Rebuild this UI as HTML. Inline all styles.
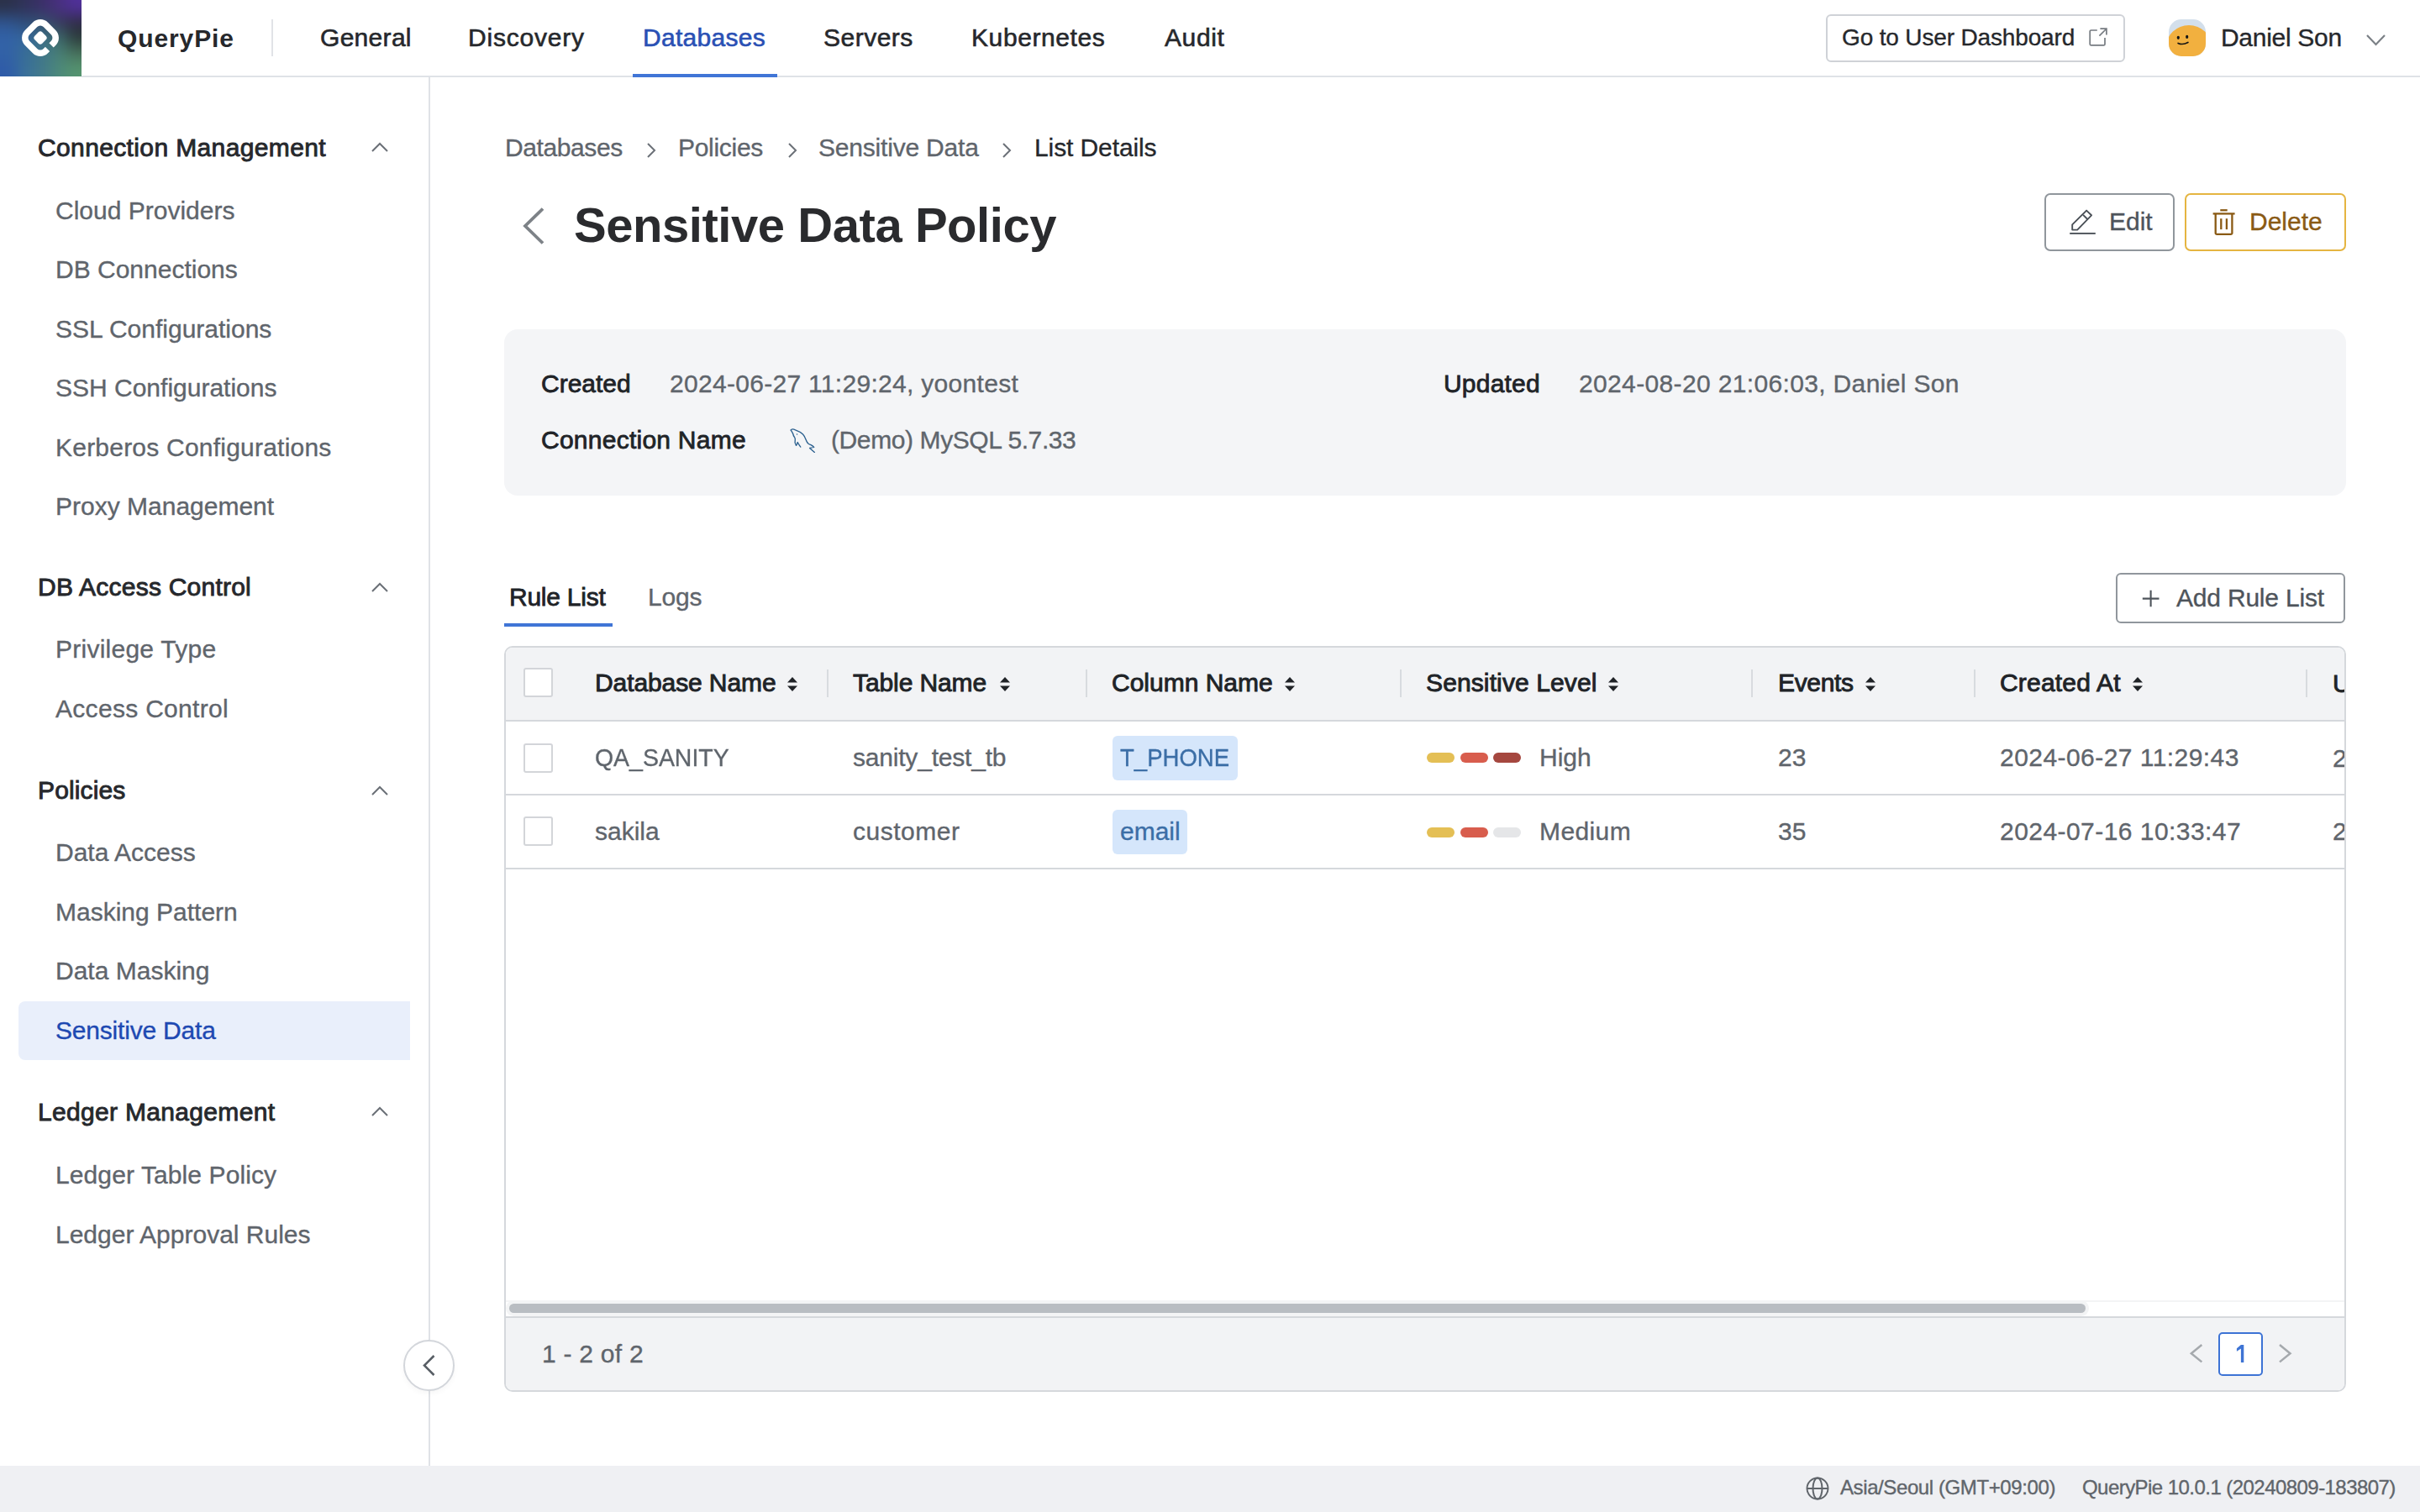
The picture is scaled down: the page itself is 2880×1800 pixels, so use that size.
<!DOCTYPE html>
<html><head><meta charset="utf-8">
<style>
*{box-sizing:border-box;margin:0;padding:0}
html,body{width:2880px;height:1800px;overflow:hidden;background:#fff;font-family:"Liberation Sans",sans-serif;color:#2a2c30}
.a{position:absolute}
.t{position:absolute;white-space:nowrap;line-height:1}
.f30{font-size:30px}
.b{font-weight:bold}
.g{color:#5f656c}
.dk{color:#26282c}
.sb{position:absolute;left:66px;font-size:30px;line-height:30px;color:#5f656c;white-space:nowrap}
.sh{position:absolute;left:45px;font-size:30px;line-height:30px;color:#26282c;white-space:nowrap;-webkit-text-stroke:0.9px #26282c}
.t,.sb,.td{-webkit-text-stroke:0.35px currentColor}
.b{-webkit-text-stroke:0}
.chev{position:absolute;left:442px;width:20px;height:12px}
.sep{position:absolute;top:797px;width:2px;height:33px;background:#d8dbdf}
.th{position:absolute;top:798px;font-size:30px;line-height:30px;color:#202327;white-space:nowrap;-webkit-text-stroke:0.9px #202327}
.td{position:absolute;font-size:30px;line-height:30px;color:#5f656c;white-space:nowrap}
.cb{position:absolute;left:623px;width:35px;height:35px;border:2px solid #d3d5d9;border-radius:3px;background:#fff}
.sort{position:absolute;top:805px;width:14px;height:19px}
.bar{position:absolute;width:33px;height:12px;border-radius:6px}
.sm{-webkit-text-stroke:0.8px #202327}
.navi{-webkit-text-stroke:0.6px currentColor}
</style></head>
<body>
<!-- HEADER -->
<div class="a" style="left:0;top:0;width:97px;height:91px;overflow:hidden;background:#3a6a8a"><div style="position:absolute;left:-30px;top:-30px;width:157px;height:151px;display:grid;grid-template-columns:50px 20px 20px 20px 47px;grid-template-rows:48px 18px 18px 18px 49px;filter:blur(9px)"><div style="background:#2b3149"></div><div style="background:#30325a"></div><div style="background:#3b2f68"></div><div style="background:#48307f"></div><div style="background:#50309a"></div><div style="background:#2f5590"></div><div style="background:#2f4d7a"></div><div style="background:#33536f"></div><div style="background:#383a5e"></div><div style="background:#2f2c45"></div><div style="background:#3262a8"></div><div style="background:#35679e"></div><div style="background:#3e7088"></div><div style="background:#3d6a6c"></div><div style="background:#2b3b3a"></div><div style="background:#3262a6"></div><div style="background:#376c96"></div><div style="background:#3f7589"></div><div style="background:#487f76"></div><div style="background:#476f5a"></div><div style="background:#2f5ba8"></div><div style="background:#39709a"></div><div style="background:#42798a"></div><div style="background:#4c897a"></div><div style="background:#55946f"></div></div></div>
<svg class="a" style="left:0;top:0" width="97" height="91" viewBox="0 0 97 91">
 <defs><mask id="qm" maskUnits="userSpaceOnUse" x="0" y="0" width="97" height="91">
  <rect x="0" y="0" width="97" height="91" fill="#000"/>
  <g transform="rotate(45 48 45)">
   <rect x="32.5" y="29.5" width="31" height="31" rx="9" fill="none" stroke="#fff" stroke-width="7.5"/>
   <rect x="41.7" y="38.7" width="12.6" height="12.6" rx="3.2" fill="#fff"/>
   <rect x="59" y="42" width="10" height="6.5" fill="#000"/>
  </g>
 </mask></defs>
 <rect x="0" y="0" width="97" height="91" fill="#fff" mask="url(#qm)"/>
</svg>
<div class="a" style="left:97px;top:90px;width:2783px;height:2px;background:#dfe2e7"></div>
<div class="t b dk" style="left:140px;top:31px;font-size:30px;letter-spacing:0.9px">QueryPie</div>
<div class="a" style="left:323px;top:23px;width:2px;height:44px;background:#e1e3e7"></div>
<div class="t dk navi" style="left:381px;top:30px;font-size:30px;letter-spacing:0.3px">General</div>
<div class="t dk navi" style="left:557px;top:30px;font-size:30px;letter-spacing:0.8px">Discovery</div>
<div class="t navi" style="left:765px;top:30px;font-size:30px;letter-spacing:0.3px;color:#2a50b4">Databases</div>
<div class="a" style="left:753px;top:88px;width:172px;height:4px;background:#4075d6"></div>
<div class="t dk navi" style="left:980px;top:30px;font-size:30px;letter-spacing:0.5px">Servers</div>
<div class="t dk navi" style="left:1156px;top:30px;font-size:30px;letter-spacing:0.6px">Kubernetes</div>
<div class="t dk navi" style="left:1386px;top:30px;font-size:30px;letter-spacing:0.6px">Audit</div>

<div class="a" style="left:2173px;top:17px;width:356px;height:57px;border:2px solid #cfd2d7;border-radius:6px;background:#fff"></div>
<div class="t dk" style="left:2192px;top:31px;font-size:28px;letter-spacing:-0.15px">Go to User Dashboard</div>
<svg class="a" style="left:2484px;top:33px" width="26" height="26" viewBox="0 0 26 26" fill="none" stroke="#767b81" stroke-width="1.7">
 <path d="M11.8 3H4.7a1.5 1.5 0 0 0-1.5 1.5V19.4a1.5 1.5 0 0 0 1.5 1.5H19.5a1.5 1.5 0 0 0 1.5-1.5V12.1"/><path d="M15.4 1.2H22.9V8.5"/><path d="M22.6 1.5L14.4 9.7"/>
</svg>
<svg class="a" style="left:2581px;top:23px" width="44" height="44" viewBox="0 0 44 44">
 <defs><clipPath id="av"><rect x="0" y="0" width="44" height="44" rx="15"/></clipPath></defs>
 <g clip-path="url(#av)">
  <rect x="0" y="0" width="44" height="44" fill="#d3dfeb"/>
  <ellipse cx="24" cy="33" rx="27" ry="26" fill="#f2b03f"/>
 </g>
 <ellipse cx="11.3" cy="21.8" rx="1.6" ry="2.1" fill="#141414"/><ellipse cx="21.7" cy="20.9" rx="1.6" ry="2.1" fill="#141414"/>
 <path d="M11.1 28.4Q16.5 31 22.9 27.5" stroke="#141414" stroke-width="1.7" fill="none" stroke-linecap="round"/>
</svg>
<div class="t dk" style="left:2643px;top:30px;font-size:30px;letter-spacing:-0.3px">Daniel Son</div>
<svg class="a" style="left:2815px;top:40px" width="25" height="15" viewBox="0 0 25 15" fill="none" stroke="#7b8086" stroke-width="2.2">
 <path d="M2 2l10.5 11L23 2"/>
</svg>

<!-- SIDEBAR -->
<div class="a" style="left:510px;top:92px;width:2px;height:1653px;background:#dfe2e7"></div>
<div class="sh" style="top:161px;letter-spacing:0.37px">Connection Management</div>
<svg class="chev" style="top:169px" viewBox="0 0 20 12" fill="none" stroke="#6b7077" stroke-width="2"><path d="M1 11L10 2l9 9"/></svg>
<div class="sb" style="top:236px">Cloud Providers</div>
<div class="sb" style="top:306px">DB Connections</div>
<div class="sb" style="top:377px">SSL Configurations</div>
<div class="sb" style="top:447px">SSH Configurations</div>
<div class="sb" style="letter-spacing:0.22px;top:518px">Kerberos Configurations</div>
<div class="sb" style="top:588px">Proxy Management</div>
<div class="sh" style="top:684px;letter-spacing:0.23px">DB Access Control</div>
<svg class="chev" style="top:693px" viewBox="0 0 20 12" fill="none" stroke="#6b7077" stroke-width="2"><path d="M1 11L10 2l9 9"/></svg>
<div class="sb" style="letter-spacing:0.25px;top:758px">Privilege Type</div>
<div class="sb" style="letter-spacing:0.3px;top:829px">Access Control</div>
<div class="sh" style="top:926px;letter-spacing:0.13px">Policies</div>
<svg class="chev" style="top:935px" viewBox="0 0 20 12" fill="none" stroke="#6b7077" stroke-width="2"><path d="M1 11L10 2l9 9"/></svg>
<div class="sb" style="top:1000px">Data Access</div>
<div class="sb" style="top:1071px">Masking Pattern</div>
<div class="sb" style="top:1141px">Data Masking</div>
<div class="a" style="left:22px;top:1192px;width:466px;height:70px;border-radius:8px 0 0 8px;background:#e9effb"></div>
<div class="sb" style="top:1212px;color:#1e49b2;letter-spacing:-0.2px">Sensitive Data</div>
<div class="sh" style="top:1309px;letter-spacing:0.32px">Ledger Management</div>
<svg class="chev" style="top:1317px" viewBox="0 0 20 12" fill="none" stroke="#6b7077" stroke-width="2"><path d="M1 11L10 2l9 9"/></svg>
<div class="sb" style="letter-spacing:0.1px;top:1384px">Ledger Table Policy</div>
<div class="sb" style="top:1455px">Ledger Approval Rules</div>
<div class="a" style="left:480px;top:1595px;width:61px;height:61px;border-radius:50%;border:2px solid #d3d6db;background:#fff;box-shadow:0 3px 6px rgba(0,0,0,0.035)"></div>
<svg class="a" style="left:500px;top:1611px" width="22" height="30" viewBox="0 0 22 30" fill="none" stroke="#575d64" stroke-width="2.6"><path d="M16.5 3L5 14.5l11.5 11.5"/></svg>

<!-- MAIN -->
<div class="t g" style="left:601px;top:161px;font-size:30px;letter-spacing:-0.4px">Databases</div>
<svg class="a" style="left:768px;top:169px" width="14" height="20" viewBox="0 0 14 20" fill="none" stroke="#6b7077" stroke-width="2"><path d="M3 2l8 8-8 8"/></svg>
<div class="t g" style="left:807px;top:161px;font-size:30px;letter-spacing:-0.3px">Policies</div>
<svg class="a" style="left:936px;top:169px" width="14" height="20" viewBox="0 0 14 20" fill="none" stroke="#6b7077" stroke-width="2"><path d="M3 2l8 8-8 8"/></svg>
<div class="t g" style="left:974px;top:161px;font-size:30px;letter-spacing:-0.2px">Sensitive Data</div>
<svg class="a" style="left:1191px;top:169px" width="14" height="20" viewBox="0 0 14 20" fill="none" stroke="#6b7077" stroke-width="2"><path d="M3 2l8 8-8 8"/></svg>
<div class="t dk" style="left:1231px;top:161px;font-size:30px;letter-spacing:-0.1px">List Details</div>

<svg class="a" style="left:618px;top:244px" width="32" height="50" viewBox="0 0 32 50" fill="none" stroke="#7d8287" stroke-width="3.8"><path d="M28 4.5L7 25l21 20.5"/></svg>
<div class="t b" style="left:683px;top:239px;font-size:58px;letter-spacing:-0.45px;color:#2a2b2e">Sensitive Data Policy</div>

<div class="a" style="left:2433px;top:230px;width:155px;height:69px;border:2px solid #90969c;border-radius:7px;background:#fff"></div>
<svg class="a" style="left:2459px;top:249px" width="36" height="32" viewBox="0 0 36 32" fill="none" stroke="#4a5057" stroke-width="1.9" stroke-linejoin="round">
 <path d="M7.2 24.6V18.4L24.1 1.6L30 7.3L13.2 24.6Z"/><path d="M20.1 6.9L25.1 11.8"/><path d="M4.2 28.9H34.8"/>
</svg>
<div class="t" style="left:2510px;top:249px;font-size:30px;color:#4e545b">Edit</div>
<div class="a" style="left:2600px;top:230px;width:192px;height:69px;border:2px solid #e5b541;border-radius:7px;background:#fff"></div>
<svg class="a" style="left:2633px;top:249px" width="28" height="32" viewBox="0 0 28 32" fill="none" stroke="#8a5a14" stroke-width="2.3">
 <path d="M0.6 5.4h26"/><path d="M9.3 1.25h8.4"/><path d="M3.7 5.4v23a1.5 1.5 0 0 0 1.5 1.5H21.9a1.5 1.5 0 0 0 1.5-1.5V5.4"/><path d="M10.3 11.2v12.9"/><path d="M16.9 11.2v12.9"/>
</svg>
<div class="t" style="left:2677px;top:249px;font-size:30px;color:#8a5a14">Delete</div>

<!-- info card -->
<div class="a" style="left:600px;top:392px;width:2192px;height:198px;border-radius:16px;background:#f4f5f7"></div>
<div class="t sm" style="left:644px;top:442px;font-size:30px;letter-spacing:0px;color:#202327">Created</div>
<div class="t g" style="left:797px;top:442px;font-size:30px;letter-spacing:0.3px">2024-06-27 11:29:24, yoontest</div>
<div class="t sm" style="left:644px;top:509px;font-size:30px;letter-spacing:0.25px;color:#202327">Connection Name</div>
<svg class="a" style="left:930px;top:500px" width="50" height="50" viewBox="0 0 50 50" fill="none" stroke="#2a5f8e" stroke-width="1.35" stroke-linejoin="round" stroke-linecap="round">
 <path d="M11.2 12C12 10.5 14 10.5 16.5 11.9C19 12.8 23 14.5 25.5 17C28 19.5 29 23 30 25.5C31 28 33 29 35 29.6C36.5 30.3 37.8 31.3 38.7 32.4L33.6 33.4L39.4 38.4"/>
 <path d="M11.2 12C12 13.5 13.8 15.5 14.2 18C14.6 20 16.5 21 16.3 23C15.8 25 16 28 17.5 30.4C18.5 30 18.7 27.5 19.2 26.5C20 28 21.5 30.5 22.8 32.1"/>
 <circle cx="18.5" cy="17" r="0.7" fill="#2a5f8e" stroke="none"/>
</svg>
<div class="t g" style="left:989px;top:509px;font-size:30px;letter-spacing:-0.4px">(Demo) MySQL 5.7.33</div>
<div class="t sm" style="left:1718px;top:442px;font-size:30px;letter-spacing:0.2px;color:#202327">Updated</div>
<div class="t g" style="left:1879px;top:442px;font-size:30px;letter-spacing:0.35px">2024-08-20 21:06:03, Daniel Son</div>

<!-- tabs -->
<div class="t sm" style="left:606px;top:696px;font-size:30px;letter-spacing:-0.25px;color:#202327">Rule List</div>
<div class="t g" style="left:771px;top:696px;font-size:30px;letter-spacing:-0.2px">Logs</div>
<div class="a" style="left:600px;top:742px;width:129px;height:4px;background:#4075d6"></div>
<div class="a" style="left:2518px;top:682px;width:273px;height:60px;border:2px solid #90969c;border-radius:6px;background:#fff"></div>
<svg class="a" style="left:2548px;top:702px" width="24" height="24" viewBox="0 0 24 24" fill="none" stroke="#4e545b" stroke-width="2.1"><path d="M11.6 0.7v19.5M1.8 10.65h19.7"/></svg>
<div class="t" style="left:2590px;top:697px;font-size:30px;letter-spacing:-0.2px;color:#4e545b">Add Rule List</div>

<!-- table -->
<div class="a" style="left:600px;top:769px;width:2192px;height:888px;border:2px solid #d5d8dc;border-radius:10px;background:#fff;overflow:hidden">
 <div class="a" style="left:0;top:0;width:2188px;height:88px;background:#f2f3f5;border-bottom:2px solid #d5d8dc"></div>
 <div class="a" style="left:0;top:174px;width:2188px;height:2px;background:#d5d8dc"></div>
 <div class="a" style="left:0;top:262px;width:2188px;height:2px;background:#d5d8dc"></div>
 <div class="a" style="left:0;top:777px;width:2188px;height:2px;background:#f3f4f5"></div>
 <div class="a" style="left:4px;top:781px;width:1876px;height:11px;border-radius:6px;background:#b9bdc2;box-shadow:0 0 0 4px #f3f4f5"></div>
 <div class="a" style="left:0;top:796px;width:2188px;height:92px;background:#f2f3f5;border-top:2px solid #d5d8dc"></div>
</div>
<div class="cb" style="top:795px"></div>
<div class="th" style="left:708px;letter-spacing:-0.1px">Database Name</div>
<svg class="sort" style="left:936px" viewBox="0 0 14 19"><path d="M7 1l6 6.5H1z M7 18l6-6.5H1z" fill="#202327"/></svg>
<div class="sep" style="left:984px"></div>
<div class="th" style="left:1015px;letter-spacing:-0.1px">Table Name</div>
<svg class="sort" style="left:1189px" viewBox="0 0 14 19"><path d="M7 1l6 6.5H1z M7 18l6-6.5H1z" fill="#202327"/></svg>
<div class="sep" style="left:1292px"></div>
<div class="th" style="left:1323px;letter-spacing:0px">Column Name</div>
<svg class="sort" style="left:1528px" viewBox="0 0 14 19"><path d="M7 1l6 6.5H1z M7 18l6-6.5H1z" fill="#202327"/></svg>
<div class="sep" style="left:1666px"></div>
<div class="th" style="left:1697px;letter-spacing:0.12px">Sensitive Level</div>
<svg class="sort" style="left:1913px" viewBox="0 0 14 19"><path d="M7 1l6 6.5H1z M7 18l6-6.5H1z" fill="#202327"/></svg>
<div class="sep" style="left:2084px"></div>
<div class="th" style="left:2116px;letter-spacing:-0.35px">Events</div>
<svg class="sort" style="left:2219px" viewBox="0 0 14 19"><path d="M7 1l6 6.5H1z M7 18l6-6.5H1z" fill="#202327"/></svg>
<div class="sep" style="left:2349px"></div>
<div class="th" style="left:2380px;letter-spacing:0.2px">Created At</div>
<svg class="sort" style="left:2537px" viewBox="0 0 14 19"><path d="M7 1l6 6.5H1z M7 18l6-6.5H1z" fill="#202327"/></svg>
<div class="sep" style="left:2744px"></div>
<div class="a" style="left:2760px;top:790px;width:30px;height:50px;overflow:hidden"><div class="th" style="left:16px;top:9px">U</div></div>

<!-- row 1 -->
<div class="cb" style="top:885px"></div>
<div class="td" style="left:708px;top:887px;transform:scaleX(0.948);transform-origin:0 0">QA_SANITY</div>
<div class="td" style="left:1015px;top:887px;letter-spacing:-0.2px">sanity_test_tb</div>
<div class="a" style="left:1324px;top:876px;width:149px;height:53px;border-radius:6px;background:#d5e6fb"></div>
<div class="td" style="left:1333px;top:887px;color:#3b6ea6;transform:scaleX(0.918);transform-origin:0 0">T_PHONE</div>
<div class="bar" style="left:1698px;top:896px;background:#e4bf55"></div>
<div class="bar" style="left:1738px;top:896px;background:#d85d4d"></div>
<div class="bar" style="left:1777px;top:896px;background:#a5473f"></div>
<div class="td" style="left:1832px;top:887px">High</div>
<div class="td" style="left:2116px;top:887px">23</div>
<div class="td" style="left:2380px;top:887px;letter-spacing:0.45px">2024-06-27 11:29:43</div>
<div class="a" style="left:2760px;top:870px;width:30px;height:60px;overflow:hidden"><div class="td" style="left:16px;top:18px">2</div></div>

<!-- row 2 -->
<div class="cb" style="top:972px"></div>
<div class="td" style="left:708px;top:975px">sakila</div>
<div class="td" style="left:1015px;top:975px;letter-spacing:0.5px">customer</div>
<div class="a" style="left:1324px;top:964px;width:89px;height:53px;border-radius:6px;background:#d5e6fb"></div>
<div class="td" style="left:1333px;top:975px;color:#3b6ea6">email</div>
<div class="bar" style="left:1698px;top:985px;background:#e4bf55"></div>
<div class="bar" style="left:1738px;top:985px;background:#d85d4d"></div>
<div class="bar" style="left:1777px;top:985px;background:#e5e6e8"></div>
<div class="td" style="left:1832px;top:975px;letter-spacing:0.4px">Medium</div>
<div class="td" style="left:2116px;top:975px">35</div>
<div class="td" style="left:2380px;top:975px;letter-spacing:0.45px">2024-07-16 10:33:47</div>
<div class="a" style="left:2760px;top:958px;width:30px;height:60px;overflow:hidden"><div class="td" style="left:16px;top:17px">2</div></div>

<!-- table footer -->
<div class="td" style="left:645px;top:1597px;letter-spacing:0.25px">1 - 2 of 2</div>
<svg class="a" style="left:2603px;top:1598px" width="22" height="28" viewBox="0 0 22 28" fill="none" stroke="#a5a9ad" stroke-width="2.5"><path d="M17.3 3L4.8 13.2L17.3 23.4"/></svg>
<div class="a" style="left:2640px;top:1586px;width:53px;height:52px;border:2px solid #3d73d5;border-radius:5px;background:#fff"></div>
<svg class="a" style="left:2660px;top:1600px" width="12" height="24" viewBox="0 0 12 24"><path d="M6.9 1H10.3V22.1H6.9V5.4L1.9 8.7V5.2Z" fill="#3f74d4"/></svg>
<svg class="a" style="left:2708px;top:1598px" width="22" height="28" viewBox="0 0 22 28" fill="none" stroke="#a5a9ad" stroke-width="2.5"><path d="M5 3L17.5 13.2L5 23.4"/></svg>

<!-- page footer -->
<div class="a" style="left:0;top:1745px;width:2880px;height:55px;background:#eff0f3"></div>
<svg class="a" style="left:2148px;top:1757px" width="30" height="30" viewBox="0 0 30 30" fill="none" stroke="#60656b" stroke-width="2">
 <circle cx="15" cy="15" r="12.5"/><ellipse cx="15" cy="15" rx="5.5" ry="12.5"/><path d="M2.5 15h25"/>
</svg>
<div class="t" style="left:2190px;top:1759px;font-size:24px;letter-spacing:-0.4px;color:#60656b">Asia/Seoul (GMT+09:00)</div>
<div class="t" style="left:2478px;top:1759px;font-size:24px;letter-spacing:-0.55px;color:#60656b">QueryPie 10.0.1 (20240809-183807)</div>
</body></html>
